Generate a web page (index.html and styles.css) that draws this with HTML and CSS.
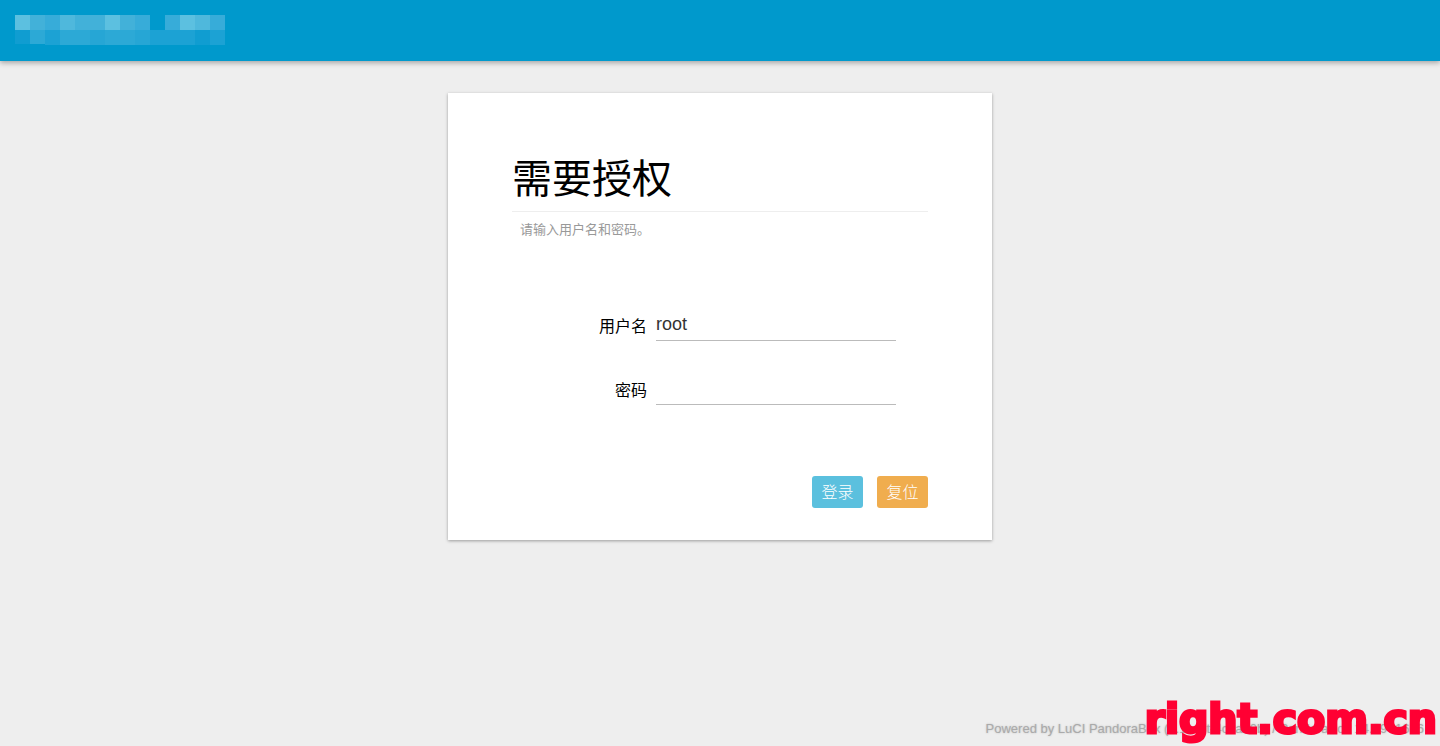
FILE: index.html
```html
<!DOCTYPE html>
<html lang="zh-CN">
<head>
<meta charset="utf-8">
<meta name="viewport" content="width=device-width, initial-scale=1">
<title>PandoraBox - LuCI</title>
<link rel="stylesheet" href="styles.css">
</head>
<body>
<header class="topbar">
  <svg class="brand" width="210" height="30" viewBox="0 0 210 30" shape-rendering="crispEdges" aria-hidden="true">
    <path fill="#5cc0e0" d="M0 0h15v15H0zM90 0h15v15H90zM165 0h15v15h-15z"/>
    <path fill="#4fb8dc" d="M45 0h15v15H45zM180 0h15v15h-15z"/>
    <path fill="#42b1d9" d="M15 0h15v15H15zM60 0h30v15H60zM105 0h15v15h-15z"/>
    <path fill="#37acd9" d="M30 0h15v15H30zM120 0h15v15h-15zM150 0h15v15h-15zM195 0h15v15h-15z"/>
    <path fill="#2ca9d6" d="M15 15h15v14H15zM45 15h30v15H45zM90 15h30v15H90z"/>
    <path fill="#26a6d5" d="M75 15h15v15H75zM120 15h15v15h-15z"/>
    <path fill="#1ca2d4" d="M30 15h15v15H30zM135 15h45v15h-45zM195 15h15v15h-15z"/>
    <path fill="#109dd1" d="M0 15h15v14H0zM180 15h15v15h-15z"/>
  </svg>
</header>
<main class="page">
  <form class="card">
    <h1 class="title">需要授权</h1>
    <p class="hint">请输入用户名和密码。</p>
    <div class="fields">
      <div class="field">
        <label class="label" for="username">用户名</label>
        <input class="input" id="username" type="text" value="root">
      </div>
      <div class="field">
        <label class="label" for="password">密码</label>
        <input class="input" id="password" type="password">
      </div>
    </div>
    <div class="actions">
      <button class="button button-login" type="submit">登录</button>
      <button class="button button-reset" type="reset">复位</button>
    </div>
  </form>
</main>
<footer class="footer">Powered by LuCI PandoraBox (0.11 git-4c9a20b) / PandoraBox 14.09 r1656</footer>
<div class="watermark">right.com.cn</div>
</body>
</html>
```
FILE: styles.css
```css
* {
  box-sizing: border-box;
}

body {
  display: flex;
  flex-direction: column;
  min-height: 100vh;
  margin: 0;
  background: #eee;
  color: #000;
  font-family: "Liberation Sans", "Noto Sans CJK SC", sans-serif;
  font-size: 16px;
}

.topbar {
  padding: 15px 15px 16px;
  background: #0099cc;
  box-shadow: 0 2px 5px rgba(0, 0, 0, 0.3);
}

.brand {
  display: block;
}

.page {
  flex: 1;
  padding: 32px 16px;
}

.card {
  max-width: 544px;
  margin: 0 auto;
  padding: 56px 64px 32px;
  background: #fff;
  box-shadow: 0 1px 3px rgba(0, 0, 0, 0.35);
}

.title {
  margin: 0;
  padding-bottom: 2px;
  border-bottom: 1px solid #eee;
  font-size: 40px;
  font-weight: 400;
  line-height: 60px;
}

.hint {
  margin: 8px;
  color: #999;
  font-size: 13px;
  line-height: 20px;
}

.fields {
  display: flex;
  flex-direction: column;
  gap: 32px;
  padding: 61px 32px 0 0;
}

.field {
  display: flex;
  align-items: center;
  justify-content: flex-end;
  gap: 9px;
}

.label {
  padding-top: 4px;
  line-height: 24px;
}

.input {
  width: 240px;
  height: 32px;
  padding: 0;
  border: 0;
  border-bottom: 1px solid #bbb;
  outline: 0;
  background: transparent;
  color: #333;
  font: 18px "Liberation Sans", sans-serif;
}

.actions {
  display: flex;
  justify-content: flex-end;
  gap: 14px;
  padding-top: 71px;
}

.button {
  min-width: 51px;
  height: 32px;
  padding: 0 9px 2px;
  border: 0;
  border-radius: 3px;
  color: #fff;
  font-family: inherit;
  font-size: 16px;
  font-weight: 300;
}

.button-login {
  background: #5bc0de;
}

.button-reset {
  background: #f0ad4e;
}

.footer {
  padding: 0 16px 7px;
  color: #aaa;
  font-size: 13px;
  line-height: 20px;
  text-align: right;
  text-shadow: 0 0 2px #bbb;
}

.watermark {
  position: fixed;
  right: 3px;
  bottom: 0;
  color: #ff0033;
  font-family: "DejaVu Sans", sans-serif;
  font-size: 41px;
  font-weight: 700;
  line-height: 54px;
  -webkit-text-stroke: 3px #ff0033;
}
```
